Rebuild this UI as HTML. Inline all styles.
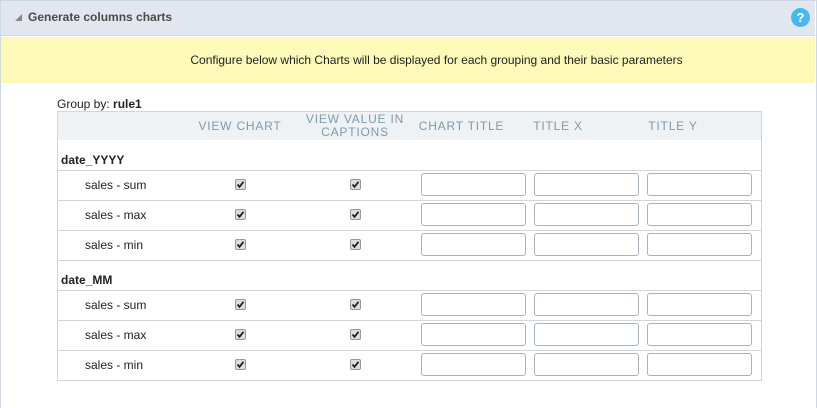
<!DOCTYPE html><html><head><style>
*{box-sizing:border-box;margin:0;padding:0}
body{width:817px;height:408px;background:#fff;font-family:"Liberation Sans",Arial,sans-serif;font-size:12px;color:#222;position:relative;overflow:hidden}
.a{position:absolute}
.frame{left:0;top:0;width:817px;height:408px;border:1px solid #cfd8e2;border-bottom:none}
.hdr{left:1px;top:1px;width:814px;height:35px;background:#e2e7ef;border-bottom:1px solid #cfd8e2}
.yel{left:1px;top:37px;width:814px;height:46px;background:#fdf9b8}
.th{color:#7f9aa8;font-size:12px;letter-spacing:0.8px;text-align:center;line-height:13px}
.line{left:57px;width:705px;height:1px;background:#cfd6dc}
.cb{width:11px;height:11px;border:1px solid #999;border-radius:2px;background:#ddd;}
.cb svg{display:block}
.in{width:105px;height:23px;border:1px solid #a9b3bd;border-radius:3px;background:#fff}
.lbl{font-size:12px;color:#222}
</style></head><body>
<div class="a frame"></div>
<div class="a hdr"></div>
<div class="a" style="left:15px;top:14px;width:0;height:0;border-left:7px solid transparent;border-bottom:7px solid #888"></div>
<div class="a" style="left:28px;top:10px;font-size:12px;font-weight:bold;color:#4a4a4a">Generate columns charts</div>
<div class="a" style="left:791px;top:8px;width:19px;height:19px;border-radius:50%;background:#4ab8f0;color:#fff;font-weight:bold;font-size:13px;text-align:center;line-height:19px">?</div>
<div class="a yel"></div>
<div class="a" style="left:28px;width:817px;top:53px;text-align:center;font-size:12px;color:#222">Configure below which Charts will be displayed for each grouping and their basic parameters</div>
<div class="a" style="left:57px;top:97px">Group by: <b>rule1</b></div>
<div class="a" style="left:57px;top:111px;width:705px;height:270px;border:1px solid #cfd6dc"></div>
<div class="a" style="left:58px;top:112px;width:703px;height:28px;background:#eef2f5"></div>
<div class="a th" style="left:190px;width:100px;top:120px">VIEW CHART</div>
<div class="a th" style="left:295px;width:120px;top:113px">VIEW VALUE IN CAPTIONS</div>
<div class="a th" style="left:414px;width:95px;top:120px">CHART TITLE</div>
<div class="a th" style="left:523px;width:70px;top:120px">TITLE X</div>
<div class="a th" style="left:638px;width:70px;top:120px">TITLE Y</div>
<div class="a" style="left:61px;top:153px;font-weight:bold">date_YYYY</div>
<div class="a" style="left:61px;top:273px;font-weight:bold">date_MM</div>
<div class="a line" style="top:170px"></div><div class="a line" style="top:200px"></div><div class="a line" style="top:230px"></div><div class="a line" style="top:260px"></div><div class="a line" style="top:290px"></div><div class="a line" style="top:320px"></div><div class="a line" style="top:350px"></div>
<div id="rows"></div>
<script>
var ys=[170,200,230,290,320,350],n=["sales - sum","sales - max","sales - min"],h="";
ys.forEach(function(y,i){
h+='<div class="a lbl" style="left:85px;top:'+(y+8)+'px">'+n[i%3]+'</div>';
[235,350].forEach(function(x){h+='<div class="a cb" style="left:'+x+'px;top:'+(y+9)+'px"><svg width="9" height="9" viewBox="0 0 9 9"><path d="M1.5 4.5L3.5 6.8L7.5 1.8" stroke="#222" stroke-width="1.8" fill="none"/></svg></div>';});
[421,534,647].forEach(function(x){h+='<div class="a in" style="left:'+x+'px;top:'+(y+3)+'px"></div>';});
});
document.getElementById("rows").innerHTML=h;
</script>
</body></html>
